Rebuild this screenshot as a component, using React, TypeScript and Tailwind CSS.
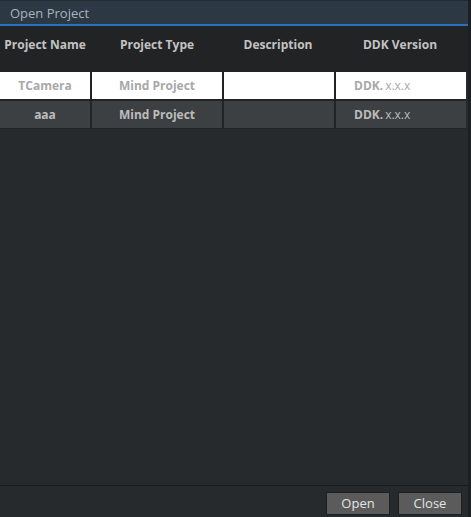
import React from 'react'

const rows = [
  { name: 'TCamera', type: 'Mind Project', desc: '', ver: 'x.x.x', selected: true },
  { name: 'aaa', type: 'Mind Project', desc: '', ver: 'x.x.x', selected: false },
]

const cols = ['w-[90px]', 'w-[130px]', 'w-[110px]', 'w-[130px]']

export default function App() {
  return (
    <div
      className="w-[471px] h-[517px] flex bg-[#1d2023] overflow-hidden"
      style={{ fontFamily: '"Open Sans", "Noto Sans", sans-serif' }}
    >
      <div className="w-[468px] flex flex-col bg-[#272a2d]">
        {/* TITLE */}
        <div className="h-[25px] mt-px flex items-center pt-[2px] px-[10px] bg-[#2c3844] border-b-2 border-[#2a72c0] text-[13px] text-[#a9b3bd]">
          Open Project
        </div>

        {/* HEADER */}
        <div className="h-[46px] flex items-center pb-[8px] bg-[#212325] text-[12px] font-bold text-[#c3c3c3]">
          <div className="w-[90px] text-center">Project Name</div>
          <div className="w-[132px] text-center pl-[2px]">Project Type</div>
          <div className="w-[112px] text-center">Description</div>
          <div className="w-[132px] text-center">DDK Version</div>
        </div>

        {/* ROWS */}
        <div className="flex flex-col gap-[2px] bg-[#212325] w-[466px] pb-[1px]">
          {rows.map((r) => {
            const cell = r.selected ? 'bg-white' : 'bg-[#3c4043]'
            const text = r.selected ? 'text-[#a8a8a8]' : 'text-[#bcbcbc]'
            return (
              <div key={r.name} className={`h-[27px] flex gap-[2px] text-[12px] ${text}`}>
                <div className={`${cols[0]} ${cell} flex items-center justify-center font-bold`}>{r.name}</div>
                <div className={`${cols[1]} ${cell} flex items-center justify-center font-bold`}>{r.type}</div>
                <div className={`${cols[2]} ${cell}`}>{r.desc}</div>
                <div className={`${cols[3]} ${cell} flex items-center pl-[18px]`}>
                  <span className="font-bold">DDK.</span>
                  <span className="ml-[2px]">{r.ver}</span>
                </div>
              </div>
            )
          })}
        </div>

        <div className="flex-1 border-b border-[#17191b]" />

        {/* FOOTER */}
        <div className="h-[31px] flex items-start justify-end gap-[8px] pt-[6px] pr-[6px]">
          <button className="w-[64px] h-[23px] bg-[#5b5b5b] border border-[#1f1f1f] text-[13px] text-[#e4e4e4] leading-none">
            Open
          </button>
          <button className="w-[64px] h-[23px] bg-[#5b5b5b] border border-[#1f1f1f] text-[13px] text-[#e4e4e4] leading-none">
            Close
          </button>
        </div>
      </div>
    </div>
  )
}
